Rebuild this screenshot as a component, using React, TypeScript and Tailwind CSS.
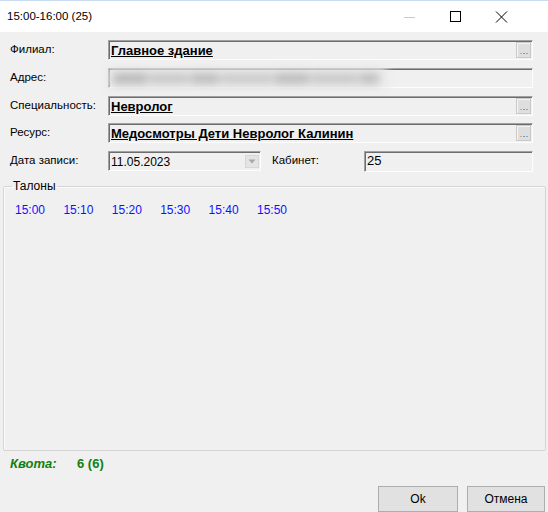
import React from 'react';

const times = ['15:00', '15:10', '15:20', '15:30', '15:40', '15:50'];

function DotsButton() {
  return (
    <div className="absolute right-[1px] top-[1px] w-[15px] h-[16px] border border-[#cacaca] bg-[#dedede] shadow-[inset_1px_1px_0_#f4f4f4] flex items-end justify-center pb-[3px] gap-[1px]">
      <span className="w-[2px] h-[1px] bg-[#f0a060]" />
      <span className="w-[2px] h-[1px] bg-[#60a0e0]" />
      <span className="w-[2px] h-[1px] bg-[#a0a0a0]" />
    </div>
  );
}

function Field({ children, className = '' }: { children?: React.ReactNode; className?: string }) {
  return (
    <div
      className={`relative h-[20px] border border-t-[#a0a0a0] border-l-[#a0a0a0] border-b-[#fdfdfd] border-r-[#fdfdfd] shadow-[inset_1px_1px_0_#6d6d6d] bg-[#f0f0f0] flex items-center pl-[2px] ${className}`}
    >
      {children}
    </div>
  );
}

function Row({ label, children }: { label: string; children: React.ReactNode }) {
  return (
    <div className="flex items-center h-[20px]">
      <div className="w-[98px] shrink-0">{label}</div>
      {children}
    </div>
  );
}

function BoldValue({ text }: { text: string }) {
  return (
    <span className="font-bold underline underline-offset-[1px] text-black text-[13px] leading-[15px]">{text}</span>
  );
}

export default function App() {
  return (
    <div
      className="w-[548px] h-[512px] overflow-hidden bg-[#f0f0f0] flex flex-col text-[11.5px] text-black"
      style={{ fontFamily: '"Liberation Sans", Arial, sans-serif' }}
    >
      {/* Title bar */}
      <div className="h-[32px] shrink-0 bg-white border-t border-[#c9dcef] flex items-center pl-[7px]">
        <span className="text-[11.5px]">15:00-16:00 (25)</span>
        <div className="ml-auto mr-[24px] flex items-center">
          <svg width="46" height="30" viewBox="0 0 46 30">
            <line x1="18" y1="15.5" x2="29" y2="15.5" stroke="#c8c8c8" strokeWidth="1" />
          </svg>
          <svg width="46" height="30" viewBox="0 0 46 30">
            <rect x="18.5" y="9.5" width="10" height="10" fill="none" stroke="#000" strokeWidth="1" />
          </svg>
          <svg width="46" height="30" viewBox="0 0 46 30">
            <path d="M18 9.5 L29 20.5 M29 9.5 L18 20.5" stroke="#000" strokeWidth="1" />
          </svg>
        </div>
      </div>

      {/* Form rows */}
      <div className="flex flex-col pl-[10px] pr-[15px] pt-[8px]">
        <Row label="Филиал:">
          <Field className="flex-1">
            <BoldValue text="Главное здание" />
            <DotsButton />
          </Field>
        </Row>
        <div className="mt-[8px]">
          <Row label="Адрес:">
            <Field className="flex-1">
              <div className="absolute left-[-2px] top-[-2px] w-[280px] h-[22px] bg-[#eaeaea] blur-[4px] flex items-center gap-[2px] px-[6px]">
                <span className="w-[34px] h-[11px] bg-[#b9b9b9]" />
                <span className="w-[40px] h-[11px] bg-[#c8c8c8]" />
                <span className="w-[28px] h-[11px] bg-[#bdbdbd]" />
                <span className="w-[52px] h-[11px] bg-[#cbcbcb]" />
                <span className="w-[34px] h-[11px] bg-[#bcbcbc]" />
                <span className="w-[46px] h-[11px] bg-[#c9c9c9]" />
                <span className="w-[20px] h-[11px] bg-[#c0c0c0]" />
              </div>
            </Field>
          </Row>
        </div>
        <div className="mt-[8px]">
          <Row label="Специальность:">
            <Field className="flex-1">
              <BoldValue text="Невролог" />
              <DotsButton />
            </Field>
          </Row>
        </div>
        <div className="mt-[7px]">
          <Row label="Ресурс:">
            <Field className="flex-1">
              <BoldValue text="Медосмотры Дети Невролог Калинин" />
              <DotsButton />
            </Field>
          </Row>
        </div>
        <div className="mt-[8px] flex items-center h-[20px]">
          <div className="w-[98px] shrink-0">Дата записи:</div>
          <Field className="w-[153px] items-start pt-[1px] text-[12px]">
            <span>11.05.2023</span>
            <div className="absolute right-[1px] top-[3px] w-[14px] h-[13px] border border-[#d6d6d6] bg-[#e4e4e4] flex items-center justify-center">
              <svg width="8" height="5" viewBox="0 0 8 5">
                <path d="M0.5 0.5 L7.5 0.5 L4 4.5 Z" fill="#a8a8a8" />
              </svg>
            </div>
          </Field>
          <div className="ml-[11px] w-[92px] shrink-0">Кабинет:</div>
          <Field className="flex-1 h-[21px] text-[13px]">
            <span>25</span>
          </Field>
        </div>
      </div>

      {/* Талоны group */}
      <fieldset className="mt-[9px] ml-[3px] mr-[2px] h-[272px] border border-[#d5d5d5] rounded-[2px] px-[8px] shadow-[inset_1px_1px_0_#fbfbfb]">
        <legend className="px-[1px] leading-[13px] text-[12px]">Талоны</legend>
        <div className="flex pt-[10px] pl-[3px] text-[12px] text-[#1010ff] leading-[14px]">
          {times.map((t) => (
            <span key={t} className="w-[48.4px] shrink-0">
              {t}
            </span>
          ))}
        </div>
      </fieldset>

      {/* Квота */}
      <div className="mt-[6px] pl-[10px] h-[14px] flex items-center text-[13px] font-bold text-[#108010]">
        <span className="italic w-[67px]">Квота:</span>
        <span>6 (6)</span>
      </div>

      {/* Buttons */}
      <div className="mt-[15px] flex justify-end pr-[3px] gap-[9px]">
        <button className="w-[80px] h-[26px] bg-[#e1e1e1] border border-[#adadad] text-[12px]">Ok</button>
        <button className="w-[78px] h-[26px] bg-[#e1e1e1] border border-[#adadad] text-[12px]">Отмена</button>
      </div>
    </div>
  );
}
